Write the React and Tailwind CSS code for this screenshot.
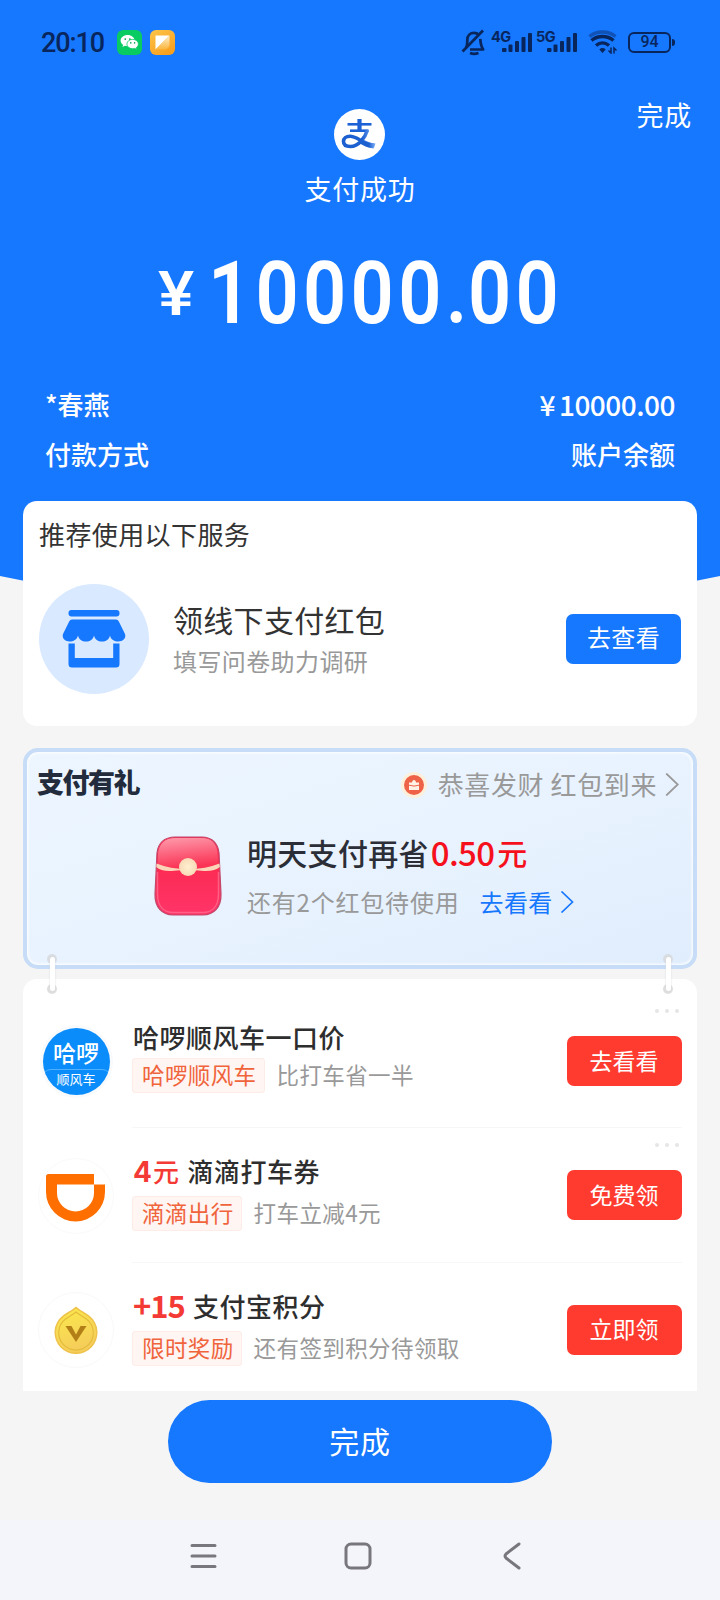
import React from "react";

const offers = [
  {
    id: "hello",
    highlight: null,
    title: "哈啰顺风车一口价",
    tag: "哈啰顺风车",
    desc: "比打车省一半",
    action: "去看看",
    closable: true,
  },
  {
    id: "didi",
    highlight: (
      <>
        <span className="mr-px text-[28px] font-bold tracking-normal font-['Inter',sans-serif]">4</span>元
      </>
    ),
    title: "滴滴打车券",
    tag: "滴滴出行",
    desc: "打车立减4元",
    action: "免费领",
    closable: true,
  },
  {
    id: "points",
    highlight: <span className="text-[31px] font-bold tracking-[-1px]">+15</span>,
    title: "支付宝积分",
    tag: "限时奖励",
    desc: "还有签到积分待领取",
    action: "立即领",
    closable: false,
  },
];

const WechatIcon = () => (
  <svg className="h-[25px] w-[25px]" viewBox="0 0 25 25">
    <rect width="25" height="25" rx="6" fill="#08cb62" />
    <path d="M10.6 4.9c-4 0-7 2.5-7 5.7 0 1.8 1 3.3 2.5 4.3l-.7 2.1 2.5-1.2c.8.3 1.700.4 2.700.4 4 0 7-2.500 7-5.600s-3-5.700-7-5.700z" fill="#fff" />
    <path d="M15.700 9.400c-3.300 0-5.800 2-5.800 4.700s2.500 4.600 5.800 4.600c.8 0 1.500-.1 2.200-.3l2 1-.6-1.700c1.300-.9 2.100-2.100 2.100-3.600 0-2.700-2.500-4.700-5.700-4.700z" fill="#fff" stroke="#08cb62" strokeWidth="0.8" />
    <g fill="#08a850">
      <circle cx="8.300" cy="9.100" r="0.9" />
      <circle cx="12.900" cy="9.100" r="0.9" />
      <circle cx="13.800" cy="12.900" r="0.8" />
      <circle cx="17.600" cy="12.900" r="0.8" />
    </g>
  </svg>
);

const NoteIcon = () => (
  <svg className="h-[25px] w-[25px]" viewBox="0 0 25 25">
    <defs>
      <linearGradient id="noteBg" x1="0" y1="0" x2="0.6" y2="1">
        <stop offset="0" stopColor="#fcc54a" />
        <stop offset="1" stopColor="#f9a01f" />
      </linearGradient>
      <linearGradient id="noteFold" x1="0" y1="0" x2="0" y2="1">
        <stop offset="0" stopColor="#fef0cf" />
        <stop offset="1" stopColor="#fbb53c" />
      </linearGradient>
    </defs>
    <rect width="25" height="25" rx="6" fill="url(#noteBg)" />
    <path d="M5.500 5.500h14L5.500 19.500z" fill="#fff" />
    <path d="M19.500 5.500v9a5 5 0 0 1-5 5h-9z" fill="url(#noteFold)" />
  </svg>
);

const MutedBell = () => (
  <svg className="h-[27px] w-[26px]" viewBox="0 0 26 27" fill="none" stroke="currentColor" strokeWidth="2.700">
    <path d="M5 18.500c1.400-2 1.300-4 1.300-7.500 0-4.500 3-7.200 6.700-7.200 2 0 3.700.7 4.900 2M19.300 9.800c.3 4.500.3 7 2.900 10.700H9" strokeLinejoin="round" />
    <path d="M22 1.500 1.500 22.500" />
    <path d="M9 24q4 1.600 8.500 0" />
  </svg>
);

const Signal = ({ label }) => (
  <div className="flex h-[24px] items-start">
    <span className="mr-[-9px] w-[20px] text-[14.500px] leading-none font-bold tracking-[-0.500px] font-['Inter',sans-serif]">{label}</span>
    <svg className="mt-[2px] h-[21px] w-[31px]" viewBox="0 0 31 21" fill="currentColor">
      <rect x="0" y="16" width="4.500" height="4" rx="1" />
      <rect x="6.500" y="12.500" width="4" height="7.500" rx="1" />
      <rect x="13" y="9" width="4" height="11" rx="1" />
      <rect x="19.500" y="5" width="4" height="15" rx="1" />
      <rect x="26" y="1" width="4" height="19" rx="1" />
    </svg>
  </div>
);

const Wifi = () => (
  <svg className="h-[24px] w-[30px]" viewBox="0 0 30 24" fill="none" stroke="currentColor" strokeWidth="3.400">
    <path d="M1.500 6.500C8.500.500 20.500.500 27.500 6.500" opacity="0.450" />
    <path d="M3.500 10.500C9.500 5.200 19.500 5.200 25.500 10.500" />
    <path d="M8 15.500c4-3.400 9-3.400 13 0" />
    <path d="M14.500 23l-3.200-3.600a5 5 0 0 1 6.400 0z" fill="currentColor" stroke="none" />
    <path d="M23 17.500v5.500l-2.500-2.500M26 23.500v-5.500l2.500 2.500" strokeWidth="1.500" />
  </svg>
);

const AlipayLogo = () => (
  <svg className="h-[51px] w-[51px]" viewBox="0 0 51 51">
    <defs>
      <linearGradient id="swash" x1="0" y1="0" x2="1" y2="0">
        <stop offset="0.600" stopColor="#1c5fd0" />
        <stop offset="1" stopColor="#7fb1fa" />
      </linearGradient>
    </defs>
    <circle cx="25.500" cy="25.500" r="25.500" fill="#fff" />
    <g fill="none" stroke="#1c62d6">
      <path d="M13.500 15.300h24" strokeWidth="2.600" />
      <path d="M25.500 10v12" strokeWidth="4.200" />
      <path d="M16 21.700h18.500" strokeWidth="2.600" />
    </g>
    <path
      d="M33.500 21c-2.500 8-9 16.500-17 16.500-4.500 0-7-2-7-5s2.700-5.200 6.500-5.200c7 0 12 7 24.500 9.200"
      fill="none"
      stroke="url(#swash)"
      strokeWidth="3.600"
    />
    <path d="M27 30.500c4 2.200 8 3.500 14.500 4l-2 5c-6-.5-10.500-3-14.500-5.500z" fill="url(#swash)" />
  </svg>
);

const StoreIcon = () => (
  <svg className="h-[58px] w-[64px]" viewBox="0 0 64 58" fill="#1677ff">
    <rect x="6.500" y="0" width="51" height="6.500" rx="3" />
    <path d="M10 9.500h44a3 3 0 0 1 2.700 1.700L63 24c1.300 4-1.800 7.500-6.500 7.500-4 0-7.700-2-8.500-6-1 4-4 6-8 6s-7-2-8-6c-1 4-4 6-8 6s-7-2-8-6c-1 4-4.500 6-8.500 6C2.800 31.500-.3 28 1 24l6.300-12.800A3 3 0 0 1 10 9.500z" />
    <path d="M6.500 33.500h6.300V48h38.400V33.500h6.300V54a3.500 3.500 0 0 1-3.500 3.500H10A3.500 3.500 0 0 1 6.500 54z" />
  </svg>
);

const Envelope = () => (
  <svg className="h-[80px] w-[68px]" viewBox="0 0 68 80">
    <defs>
      <linearGradient id="envBody" x1="0" y1="0" x2="0" y2="1">
        <stop offset="0.300" stopColor="#fb2a50" />
        <stop offset="1" stopColor="#ff3468" />
      </linearGradient>
      <linearGradient id="envFlap" x1="0.400" y1="0" x2="0.600" y2="1">
        <stop offset="0" stopColor="#fd93a5" />
        <stop offset="0.900" stopColor="#fb3355" />
      </linearGradient>
      <radialGradient id="envPearl">
        <stop offset="0" stopColor="#fff0cf" />
        <stop offset="1" stopColor="#f8dab8" />
      </radialGradient>
    </defs>
    <path d="M21 1h27c10 0 16 6.500 17 16l2 41c.4 13-7 21-18 21H19C8 79 .6 71 1 58l2-41C4 7.500 10 1 21 1z" fill="url(#envBody)" stroke="#c2486c" strokeWidth="1.200" />
    <path d="M21 2h27c9.500 0 15 6 15.500 14.500L64.500 29q-31 9-61 0l.7-12.500C5 8 11 2 21 2z" fill="url(#envFlap)" />
    <path d="M2.500 27.500Q16 33 34 33t31.500-5.500l.3 3.500q-5 4.500-16 4-16-2-32 0-11 .5-15.500-4z" fill="#fbd5b8" />
    <path d="M3.500 36v22c0 12 6 18.500 16 18.500h29c10 0 16-6.500 16-18.500V36" fill="none" stroke="#ff7f9c" strokeWidth="1.500" opacity="0.600" />
    <circle cx="34" cy="31" r="9" fill="url(#envPearl)" />
  </svg>
);

const LuckyBadge = () => (
  <svg className="h-[28px] w-[28px]" viewBox="0 0 28 28">
    <circle cx="14" cy="14" r="13" fill="#fdf0da" />
    <circle cx="14" cy="14" r="10" fill="#ee6248" />
    <path d="M9 11.500h3c0-3.500 4-3.500 4 0h3V19H9z" fill="#fff1e6" />
    <path d="M9 14.200q5 1.800 10 0" fill="none" stroke="#ee6248" strokeWidth="1" />
  </svg>
);

const Chevron = ({ className }) => (
  <svg className={className} viewBox="0 0 13 22" fill="none" stroke="currentColor" strokeWidth="1.700">
    <path d="M1 .500l11 10.500L1 21.500" />
  </svg>
);

const HelloLogo = () => (
  <div className="flex h-[67px] w-[67px] flex-col items-center overflow-hidden rounded-full bg-[#0a8dfb] text-white shadow-[0_0_0_3px_#f8fafc]">
    <span className="mt-[11px] h-[30px] text-[23px] leading-[27px] font-medium">哈啰</span>
    <span className="w-full rounded-t-[8px] border-t border-[#4fb0ff] pt-[2px] text-center text-[13px] leading-[14px]">顺风车</span>
  </div>
);

const DidiLogo = () => (
  <div className="flex h-[76px] w-[76px] items-center justify-center rounded-full border border-[#fafafa] pt-[4px] pr-[2px]">
    <svg className="h-[48px] w-[59px]" viewBox="0 0 59 48" fill="#ff6f00">
      <path d="M2.500 0H48v10.500H11V19a18.500 18.500 0 0 0 37 0v-8.500h11V18a29.500 29.500 0 0 1-59 0V2.500A2.500 2.500 0 0 1 2.500 0z" />
    </svg>
  </div>
);

const PointsLogo = () => (
  <div className="flex h-[76px] w-[76px] items-center justify-center rounded-full border border-[#f9f9f9]">
    <svg className="h-[48px] w-[44px]" viewBox="0 0 44 48">
      <defs>
        <linearGradient id="coin" x1="0" y1="0" x2="0.300" y2="1">
          <stop offset="0" stopColor="#fbe94b" />
          <stop offset="1" stopColor="#f5cd5a" />
        </linearGradient>
      </defs>
      <path d="M22 .500c3 3 8 5 13.500 9.300a21.500 21.500 0 1 1-27 0C14 5.500 19 3.500 22 .500z" fill="#eec24b" />
      <path d="M22 2.500c3 2.800 7.500 4.700 12.500 8.500a20 20 0 1 1-25 0c5-3.800 9.500-5.700 12.500-8.500z" fill="url(#coin)" />
      <path d="M22 6c3 2.500 6.500 4.200 10.500 7a17.300 17.300 0 1 1-21 0c4-2.800 7.500-4.500 10.500-7z" fill="none" stroke="#e4bb3c" strokeWidth="1.200" />
      <path d="M11.500 20h6l4.500 8.500 4.500-8.500h6L22 36z" fill="#b27f16" />
    </svg>
  </div>
);

const logos = {
  hello: <HelloLogo />,
  didi: <DidiLogo />,
  points: <PointsLogo />,
};

const StatusBar = () => (
  <div className="flex h-[84px] items-center justify-between pr-[45px] pl-[41px] text-[#08265c]">
    <div className="flex items-center">
      <span className="w-[76px] pt-[2px] text-[27px] leading-none font-medium tracking-[-1.100px] font-['Roboto',sans-serif]">20:10</span>
      <WechatIcon />
      <span className="w-[8px]" />
      <NoteIcon />
    </div>
    <div className="flex items-center">
      <MutedBell />
      <div className="ml-[4px] flex gap-[3px]">
        <Signal label="4G" />
        <Signal label="5G" />
      </div>
      <span className="ml-[10px]">
        <Wifi />
      </span>
      <div className="ml-[10px] flex h-[21px] w-[43px] items-center justify-center rounded-[6px] border-2 border-current">
        <span className="text-[16px] leading-none font-medium font-['Roboto',sans-serif]">94</span>
      </div>
      <span className="ml-px h-[7px] w-[3px] rounded-r-sm bg-current" />
    </div>
  </div>
);

const Header = () => (
  <header className="h-[648px] bg-[#1677ff] text-white [clip-path:polygon(0_0,100%_0,100%_576px,50%_648px,0_576px)]">
    <StatusBar />
    <div className="grid h-[156px] grid-cols-3 px-[28px]">
      <span />
      <div className="flex flex-col items-center pt-[25px]">
        <AlipayLogo />
        <span className="mt-[14px] text-[27px] leading-[30px] tracking-[0.700px]">支付成功</span>
      </div>
      <span className="mt-[15px] text-right text-[27px] leading-[32px] tracking-[0.700px]">完成</span>
    </div>
    <div className="flex h-[102px] items-start pl-[158px] font-['Roboto',sans-serif]">
      <span className="w-[50px] pt-[23px] text-[62px] leading-none font-medium">
        <span className="inline-block origin-left scale-x-110">¥</span>
      </span>
      <span className="origin-left scale-x-[0.860] text-[88px] leading-[105px] font-semibold tracking-[5px]">
        10000<span className="tracking-[1px]">.</span>00
      </span>
    </div>
    <div className="mt-[46px] flex flex-col gap-[18px] px-[45px] text-[26px] leading-[32px] font-medium">
      <div className="flex justify-between">
        <span>*春燕</span>
        <span className="text-[28px] tracking-[-0.500px]">
          ¥<span className="ml-[4px]">10000.00</span>
        </span>
      </div>
      <div className="flex justify-between">
        <span>付款方式</span>
        <span>账户余额</span>
      </div>
    </div>
  </header>
);

const ServiceCard = () => (
  <section className="h-[225px] rounded-[14px] bg-white px-[16px] pt-[17px]">
    <h2 className="text-[26px] leading-[31px] tracking-[0.400px] text-[#333]">推荐使用以下服务</h2>
    <div className="mt-[35px] flex items-center">
      <div className="flex h-[110px] w-[110px] items-center justify-center rounded-full bg-[#d9e9ff]">
        <StoreIcon />
      </div>
      <div className="ml-[24px] flex-1 pt-[2px]">
        <p className="text-[30px] leading-[40px] tracking-[0.300px] text-[#333]">领线下支付红包</p>
        <p className="text-[24px] leading-[43px] tracking-[0.400px] text-[#999]">填写问卷助力调研</p>
      </div>
      <button className="h-[50px] w-[115px] rounded-[7px] bg-[#1677ff] pb-[4px] text-[24px] leading-[42px] tracking-[0.400px] text-white">去查看</button>
    </div>
  </section>
);

const Link = () => (
  <div className="flex h-[40px] w-[10px] flex-col items-center">
    <span className="h-[10px] w-[10px] rounded-full bg-[#d9dde2]" />
    <span className="relative my-[-7px] w-[5px] flex-1 rounded-full bg-white shadow-[0_0_2px_#d5d9de]" />
    <span className="h-[10px] w-[10px] rounded-full bg-[#dedede]" />
  </div>
);

const GiftCard = () => (
  <section className="relative mt-[22px] h-[221px] rounded-[15px] border-4 border-[#c7dcf6] bg-linear-to-br from-[#edf6ff] via-[#e9f3ff] to-[#e0edfd] shadow-[inset_0_0_3px_1px_#fff]">
    <div className="flex items-center justify-between pt-[14px] pr-[14px] pl-[10px]">
      <h2 className="pb-[4px] text-[27px] leading-[32px] font-black tracking-[-1.500px] text-[#222c3c]">支付有礼</h2>
      <div className="flex items-center text-[#999]">
        <span className="pt-px">
          <LuckyBadge />
        </span>
        <span className="mr-[8px] ml-[10px] text-[26px] leading-[36px] tracking-[0.600px]">恭喜发财 红包到来</span>
        <Chevron className="h-[23px] w-[14px]" />
      </div>
    </div>
    <div className="mt-[30px] flex pl-[127px]">
      <span className="mt-[4px]">
        <Envelope />
      </span>
      <div className="ml-[25px]">
        <p className="flex items-center text-[30px] leading-[40px] font-medium tracking-[0.300px] text-[#2b2e36]">
          明天支付再省
          <span className="ml-[2px] flex text-[#f5101c]">
            <span className="text-[33px] tracking-[-0.700px]">0.50</span>
            <span className="ml-[3px]">元</span>
          </span>
        </p>
        <div className="mt-[11px] flex items-center text-[24px] leading-[38px] tracking-[0.800px] text-[#999]">
          还有2个红包待使用
          <span className="ml-[20px] tracking-[0.400px] text-[#1677ff]">去看看</span>
          <Chevron className="ml-[7px] h-[22px] w-[14px] text-[#1677ff]" />
        </div>
      </div>
    </div>
    {/* clips joining this panel to the list below */}
    <div className="absolute top-[202px] right-[20px] left-[20px] flex justify-between">
      <Link />
      <Link />
    </div>
  </section>
);

const MoreDots = () => (
  <div className="mr-[3px] flex gap-[6px]">
    <span className="h-[4px] w-[4px] rounded-full bg-[#e6e6e6]" />
    <span className="h-[4px] w-[4px] rounded-full bg-[#e6e6e6]" />
    <span className="h-[4px] w-[4px] rounded-full bg-[#e6e6e6]" />
  </div>
);

const OfferRow = ({ offer, last }) => (
  <li className="flex h-[134.400px]">
    <div className="flex w-[76px] items-center justify-center">{logos[offer.id]}</div>
    <div className={`ml-[18px] flex flex-1 ${last ? "" : "border-b border-[#f7f7f7]"}`}>
      <div className="flex-1 pt-[26px]">
        <p className="flex h-[34px] items-center pl-px text-[26px] leading-[34px] font-medium tracking-[0.500px] text-[#2e2e2e]">
          {offer.highlight && <span className="mr-[8px] text-[#f43a35]">{offer.highlight}</span>}
          {offer.title}
        </p>
        <div className={`flex items-center text-[22.500px] leading-[33px] tracking-[0.400px] ${offer.highlight ? "mt-[8px]" : "mt-[4px]"}`}>
          <span className="rounded-[3px] border border-[#fdece7] bg-[#fff5f2] pr-[7px] pb-[2px] pl-[9px] leading-[31px] text-[#f0643c]">{offer.tag}</span>
          <span className="ml-[12px] pb-[2px] text-[#999]">{offer.desc}</span>
        </div>
      </div>
      <div className="flex flex-col pt-[15px]">
        <div className="flex h-[27px] items-start justify-end">{offer.closable && <MoreDots />}</div>
        <button className="h-[50px] w-[115px] rounded-[7px] bg-[#ff3b30] pb-[3px] text-[23px] leading-[42px] text-white">{offer.action}</button>
      </div>
    </div>
  </li>
);

const App = () => {
  return (
    <div className="flex h-[1600px] w-[720px] flex-col overflow-hidden bg-[#f5f5f5] font-['Noto_Sans_CJK_SC',sans-serif]">
      <Header />
      <main className="relative mt-[-147px] px-[23px]">
        <ServiceCard />
        <GiftCard />
        <ul className="mt-[10px] h-[412px] overflow-hidden rounded-t-[14px] bg-white pt-[15px] pr-[15.500px] pl-[15px]">
          {offers.map((offer, index) => (
            <OfferRow key={offer.id} offer={offer} last={index === offers.length - 1} />
          ))}
        </ul>
        <div className="flex h-[129px] justify-center pt-[9px]">
          <button className="h-[83px] w-[384px] rounded-full bg-[#1677ff] pb-[4px] text-[30px] leading-[76px] tracking-[0.800px] text-white">完成</button>
        </div>
      </main>
      <nav className="flex flex-1 items-center bg-[#f4f5fa] pb-[8px] pl-[190px]">
        <svg className="h-[28px] w-[27px]" viewBox="0 0 27 28" fill="none" stroke="#77777d" strokeWidth="3" strokeLinecap="round">
          <path d="M2 3.500h23M2 14h23M2 24.500h23" />
        </svg>
        <svg className="ml-[127px] h-[28px] w-[28px]" viewBox="0 0 28 28" fill="none" stroke="#77777d" strokeWidth="3">
          <rect x="2" y="2" width="24" height="24" rx="5" />
        </svg>
        <svg className="ml-[131px] h-[28px] w-[18px]" viewBox="0 0 18 28" fill="none" stroke="#77777d" strokeWidth="3" strokeLinecap="round" strokeLinejoin="round">
          <path d="M16 2 3 12q-2 2 0 4l13 10" />
        </svg>
      </nav>
    </div>
  );
};

export default App;
